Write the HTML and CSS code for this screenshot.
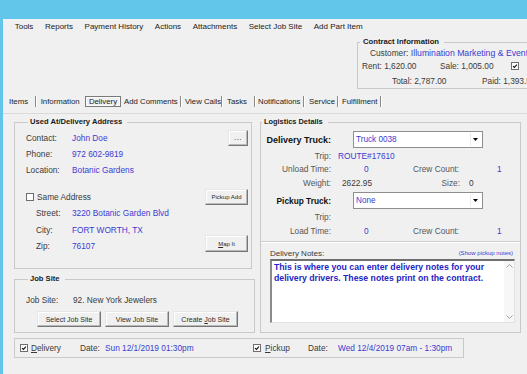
FILE: index.html
```html
<!DOCTYPE html>
<html lang="en">
<head>
<meta charset="utf-8">
<title>Contract - Delivery</title>
<link rel="stylesheet" href="styles.css">
</head>
<body>
<div class="window">
  <nav class="menubar">
    <span>Tools</span><span>Reports</span><span>Payment History</span><span>Actions</span><span>Attachments</span><span>Select Job Site</span><span>Add Part Item</span>
  </nav>

  <div class="header">
    <fieldset class="group contract">
      <legend>Contract Information</legend>
      <div class="c-row c-customer"><span class="lbl">Customer:</span> <span class="val">Illumination Marketing &amp; Events</span></div>
      <div class="c-row c-money"><span class="c-rent">Rent: 1,620.00</span><span class="c-sale">Sale: 1,005.00</span><span class="check on"><svg viewBox="0 0 8 8"><path d="M1.4 4.1 3.2 5.9 6.6 2.1"/></svg></span></div>
      <div class="c-row c-money c-totals"><span class="c-total">Total: 2,787.00</span><span class="c-paid">Paid: 1,393.50</span></div>
    </fieldset>
  </div>

  <div class="tabs">
    <span class="tab tab-items">Items</span>
    <span class="tab tab-info plain">Information</span>
    <span class="tab tab-delivery active">Delivery</span>
    <span class="tab tab-comments">Add Comments</span>
    <span class="tab tab-calls">View Calls</span>
    <span class="tab tab-tasks">Tasks</span>
    <span class="tab tab-notif">Notifications</span>
    <span class="tab tab-service">Service</span>
    <span class="tab tab-fulfill">Fulfillment</span>
  </div>

  <div class="tab-page">
    <div class="columns">
      <div class="left-col">
        <fieldset class="group address">
          <legend>Used At/Delivery Address</legend>
          <div class="addr-top">
            <div class="fields">
              <div class="row"><span class="lbl w46">Contact:</span><span class="val">John Doe</span></div>
              <div class="row"><span class="lbl w46">Phone:</span><span class="val">972 602-9819</span></div>
              <div class="row"><span class="lbl w46">Location:</span><span class="val">Botanic Gardens</span></div>
            </div>
            <button class="btn btn-dots">...</button>
          </div>
          <div class="addr-bottom">
            <div class="fields">
              <div class="row"><span class="check"></span><span class="lbl same">Same Address</span></div>
              <div class="row indent"><span class="lbl w36">Street:</span><span class="val">3220 Botanic Garden Blvd</span></div>
              <div class="row indent tall"><span class="lbl w36">City:</span><span class="val">FORT WORTH, TX</span></div>
              <div class="row indent"><span class="lbl w36">Zip:</span><span class="val">76107</span></div>
            </div>
            <div class="side-buttons">
              <button class="btn btn-tiny">Pickup Add</button>
              <button class="btn btn-tiny btn-map"><u>M</u>ap It</button>
            </div>
          </div>
        </fieldset>

        <fieldset class="group jobsite">
          <legend>Job Site</legend>
          <div class="row js-row"><span class="lbl w47">Job Site:</span><span class="plain-val">92. New York Jewelers</span></div>
          <div class="js-buttons">
            <button class="btn btn-js">Select Job Site</button>
            <button class="btn btn-js">View Job Site</button>
            <button class="btn btn-js wide">Create <u>J</u>ob Site</button>
          </div>
        </fieldset>
      </div>

      <fieldset class="group logistics">
        <legend>Logistics Details</legend>
        <div class="lg-row truck-row">
          <span class="lg-lbl truck-lbl">Delivery Truck:</span>
          <div class="select"><span class="select-text">Truck 0038</span><span class="select-btn"><svg width="5" height="3" viewBox="0 0 5 3"><path d="M0 0h5L2.5 3z"/></svg></span></div>
        </div>
        <div class="lg-row h15"><span class="lg-lbl">Trip:</span><span class="val trip-val">ROUTE#17610</span></div>
        <div class="lg-row h12"><span class="lg-lbl">Unload Time:</span><span class="val num-col">0</span><span class="lg-lbl2">Crew Count:</span><span class="val">1</span></div>
        <div class="lg-row h15"><span class="lg-lbl">Weight:</span><span class="plain-val weight-col">2622.95</span><span class="lg-lbl size-lbl">Size:</span><span class="plain-val size-val">0</span></div>
        <div class="lg-row truck-row">
          <span class="lg-lbl truck-lbl pickup">Pickup Truck:</span>
          <div class="select"><span class="select-text">None</span><span class="select-btn"><svg width="5" height="3" viewBox="0 0 5 3"><path d="M0 0h5L2.5 3z"/></svg></span></div>
        </div>
        <div class="lg-row h15"><span class="lg-lbl">Trip:</span></div>
        <div class="lg-row h14"><span class="lg-lbl">Load Time:</span><span class="val num-col">0</span><span class="lg-lbl2">Crew Count:</span><span class="val">1</span></div>
        <div class="separator"></div>
        <div class="notes-head"><span class="notes-lbl">Delivery Notes:</span><span class="notes-link">(Show pickup notes)</span></div>
        <div class="notes">
          <div class="notes-text">This is where you can enter delivery notes for your delivery drivers. These notes print on the contract.</div>
          <div class="scrollbar">
            <svg width="7" height="4" viewBox="0 0 7 4"><path d="M0.5 3.5 3.5 0.5 6.5 3.5"/></svg>
            <svg width="7" height="4" viewBox="0 0 7 4"><path d="M0.5 0.5 3.5 3.5 6.5 0.5"/></svg>
          </div>
        </div>
      </fieldset>
    </div>

    <div class="dates">
      <span class="check on"><svg viewBox="0 0 8 8"><path d="M1.4 4.1 3.2 5.9 6.6 2.1"/></svg></span>
      <span class="d-name d-name1"><u>D</u>elivery</span>
      <span class="d-lbl d-lbl1">Date:</span>
      <span class="val d-val1">Sun 12/1/2019 01:30pm</span>
      <span class="check on"><svg viewBox="0 0 8 8"><path d="M1.4 4.1 3.2 5.9 6.6 2.1"/></svg></span>
      <span class="d-name d-name2"><u>P</u>ickup</span>
      <span class="d-lbl d-lbl2">Date:</span>
      <span class="val">Wed 12/4/2019 07am - 1:30pm</span>
    </div>
  </div>
</div>
</body>
</html>
```

FILE: styles.css
```css
* { box-sizing: border-box; }
html, body { margin: 0; height: 100%; }
body {
  background: #62c6ea;
  overflow: hidden;
  font-family: "Liberation Sans", Arial, sans-serif;
  font-size: 8.3px;
  color: #3a3a3a;
}
.window {
  margin: 19px 0 0 3px;
  width: 524px;
  height: 355px;
  background: #f0f0f0;
  overflow: hidden;
}

/* menu */
.menubar {
  display: flex;
  gap: 11.6px;
  height: 16px;
  line-height: 16px;
  padding-left: 11.7px;
  font-size: 8px;
  color: #1a1a1a;
  white-space: nowrap;
}

/* group boxes */
.group {
  margin: 0;
  padding: 0;
  min-width: 0;
  border: 1px solid #c9c9c9;
}
.group legend {
  font-weight: bold;
  font-size: 7.6px;
  line-height: 10px;
  color: #1a1a1a;
  padding: 0 5px 0 2px;
  margin-left: 2px;
  white-space: nowrap;
}

/* contract */
.header { margin-top: 2px; }
.contract {
  margin-left: 354px;
  width: 200px;
  white-space: nowrap;
}
.contract legend { font-size: 7.7px; padding-left: 3px; }
.c-row { display: flex; align-items: center; }
.c-customer { height: 11px; padding-left: 12px; }
.c-customer .lbl { margin-right: 2.5px; }
.c-customer .val { font-size: 8.7px; }
.c-money { height: 15px; padding-left: 4px; }
.c-rent { width: 78px; }
.c-sale { width: 71px; }
.c-totals { padding-left: 34px; }
.c-total { width: 90px; }

/* checkbox */
.check {
  flex: none;
  width: 8px;
  height: 8px;
  border: 1px solid #6e6e6e;
  background: #fff;
  display: inline-flex;
}
.check svg { width: 6px; height: 6px; }
.check path { fill: none; stroke: #111; stroke-width: 1.5; }

/* tabs */
.tabs {
  display: flex;
  align-items: center;
  margin-top: 6px;
  height: 12px;
  font-size: 7.8px;
  color: #222;
  white-space: nowrap;
}
.tab {
  flex: none;
  height: 11px;
  line-height: 11px;
  border-right: 1px solid #8a8a8a;
  box-shadow: 1px 0 0 #fff;
}
.tab.plain { border-right-color: transparent; box-shadow: none; }
.tab-items { width: 33px; padding-left: 6px; }
.tab-info { width: 49px; padding-left: 4.7px; }
.tab-delivery {
  width: 36px;
  text-align: center;
  border: 1px solid #7a7a7a;
  box-shadow: inset 0 0 0 1px #fafafa;
  line-height: 9px;
}
.tab-comments { width: 60px; padding-left: 3px; }
.tab-calls { width: 41px; padding-left: 4px; }
.tab-tasks { width: 33px; padding-left: 5px; }
.tab-notif { width: 49px; padding-left: 3px; }
.tab-service { width: 34px; padding-left: 5px; }
.tab-fulfill { width: 43px; padding-left: 4px; }

/* tab page */
.tab-page {
  margin-top: 6px;
  border-top: 1px solid #dadada;
  padding: 3px 0 0 11px;
}
.columns {
  display: grid;
  grid-template-columns: 241px 261px;
  column-gap: 5px;
}
.left-col { display: flex; flex-direction: column; gap: 5px; }

.row { display: flex; align-items: center; height: 16px; white-space: nowrap; }
.row.tall { height: 17px; }
.lbl { color: #3a3a3a; flex: none; }
.w46 { width: 46px; }
.w36 { width: 36px; }
.w47 { width: 47px; }
.val { color: #3b3bd2; white-space: nowrap; }
.plain-val { color: #3a3a3a; white-space: nowrap; }

/* address */
.address { width: 238px; padding: 3px 3px 14px 11px; }
.addr-top { display: flex; align-items: flex-start; }
.fields { flex: 1; min-width: 0; }
.addr-bottom { display: flex; margin-top: 11px; }
.same { margin-left: 3px; }
.indent { padding-left: 10px; }
.side-buttons { width: 43px; display: flex; flex-direction: column; }

.btn {
  font-family: inherit;
  margin: 0;
  padding: 0;
  background: #f0f0f0;
  color: #2a2a2a;
  border: 1px solid;
  border-color: #e6e6e6 #767676 #767676 #e6e6e6;
  box-shadow: inset -1px -1px 0 #b9b9b9, inset 1px 1px 0 #fff;
  white-space: nowrap;
}
.btn-dots {
  width: 20px;
  height: 16px;
  font-size: 8px;
  letter-spacing: 0.5px;
  line-height: 10px;
}
.btn-tiny { width: 43px; height: 16px; font-size: 6px; }
.btn-map { height: 17px; margin-top: 30px; }

/* job site */
.jobsite { width: 241px; padding: 0 0 5px 11px; }
.js-row { height: 14px; margin-top: 9px; }
.js-buttons { display: flex; gap: 4px; margin-top: 4px; padding-left: 11px; }
.btn-js { width: 64px; height: 16px; font-size: 7px; }
.btn-js.wide { width: 65px; }

/* logistics */
.logistics { width: 261px; padding: 0 0 9px 0; }
.logistics legend { font-size: 7.4px; padding-left: 2px; margin-left: 1px; }
.lg-row { display: flex; align-items: center; white-space: nowrap; }
.h15 { height: 15px; }
.h12 { height: 12px; }
.h14 { height: 14px; }
.lg-lbl { width: 70px; flex: none; text-align: right; color: #565656; }
.truck-row { height: 17px; margin-top: 2px; }
.truck-row:first-of-type { margin-top: 4px; }
.truck-lbl { font-weight: bold; font-size: 9px; color: #111; }
.truck-lbl.pickup { font-size: 8.3px; }
.trip-val { margin-left: 7px; }
.num-col { width: 82px; padding-left: 33px; flex: none; }
.lg-lbl2 { width: 84px; flex: none; color: #565656; }
.weight-col { width: 82px; padding-left: 11px; flex: none; }
.size-lbl { width: 47px; }
.size-val { margin-left: 9px; }

.select {
  margin-left: 22px;
  width: 130px;
  height: 17px;
  background: #fff;
  border: 1px solid #8e8e8e;
  display: flex;
  align-items: center;
}
.select-text { flex: 1; padding-left: 2px; color: #3b3bd2; font-size: 8.2px; }
.select-btn {
  width: 10px;
  height: 13px;
  margin-right: 2px;
  display: flex;
  align-items: center;
  justify-content: center;
  border-left: 1px solid #ececec;
}
.select-btn path { fill: #000; }

.separator {
  margin-top: 3px;
  height: 2px;
  border-top: 1px solid #cdcdcd;
  border-bottom: 1px solid #fff;
}
.notes-head {
  display: flex;
  justify-content: space-between;
  align-items: center;
  height: 16px;
  padding: 4px 7px 0 9px;
}
.notes-lbl { font-size: 8px; color: #3a3a3a; }
.notes-link { font-size: 6px; color: #3b3bd2; }
.notes {
  margin-left: 9px;
  width: 245px;
  height: 64px;
  display: flex;
  background: #fff;
  border-style: solid;
  border-width: 2px 1px 1px 2px;
  border-color: #6f6f6f #e2e2e2 #e2e2e2 #8a8a8a;
}
.notes-text {
  flex: 1;
  padding: 1px 0 0 2px;
  font-weight: bold;
  font-size: 8.7px;
  line-height: 11px;
  color: #2424c4;
}
.scrollbar {
  width: 10px;
  background: #f7f7f7;
  display: flex;
  flex-direction: column;
  justify-content: space-between;
  align-items: center;
  padding: 3px 0 3px;
}
.scrollbar path { fill: none; stroke: #a0a0a0; stroke-width: 1; }

/* dates bar */
.dates {
  margin-top: 5px;
  width: 450px;
  height: 20px;
  border: 1px solid #c9c9c9;
  display: flex;
  align-items: center;
  padding-left: 5px;
  white-space: nowrap;
}
.d-name { color: #3a3a3a; flex: none; }
.d-name1 { margin-left: 3px; width: 49px; }
.d-lbl { flex: none; color: #3a3a3a; }
.d-lbl1 { width: 25px; }
.d-val1 { width: 148px; flex: none; }
.d-name2 { margin-left: 4px; width: 43px; }
.d-lbl2 { width: 30px; }
```
